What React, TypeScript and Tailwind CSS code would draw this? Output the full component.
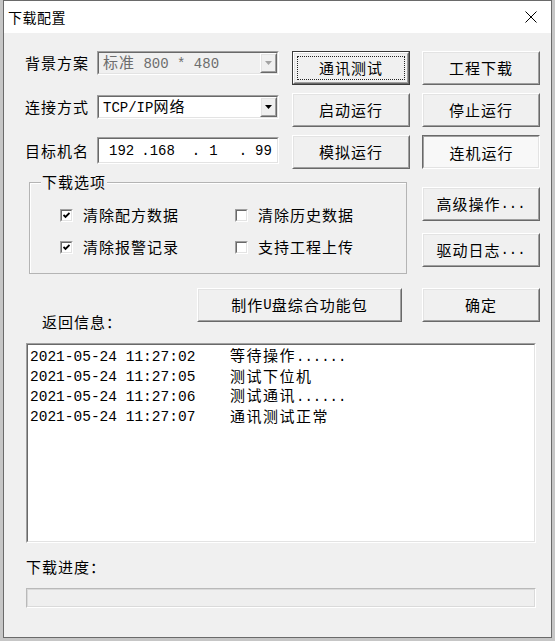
import React from "react";

const CJK = /([\u3000-\u303f\u4e00-\u9fff\uff00-\uffef]+)/;

type TProps = { text: string; cjk?: string; asc?: string };

// splits a string into CJK and ASCII runs so each gets its own font and width
const T = ({ text, cjk = "text-[15px] tracking-[1px]", asc = "text-[14px]" }: TProps) => (
	<>
		{text
			.split(CJK)
			.filter(Boolean)
			.map((s, i) =>
				CJK.test(s) ? (
					<span key={i} className={`font-['Noto_Sans_CJK_SC',sans-serif] ${cjk}`}>
						{s}
					</span>
				) : (
					<span key={i} className={`font-['Liberation_Mono',monospace] whitespace-pre ${asc}`}>
						{s}
					</span>
				),
			)}
	</>
);

const raisedOuter = "border border-t-white border-l-white border-r-[#696969] border-b-[#696969]";
const raisedInner = "border border-t-[#e3e3e3] border-l-[#e3e3e3] border-r-[#a0a0a0] border-b-[#a0a0a0]";
const sunkenOuter = "border border-t-[#a0a0a0] border-l-[#a0a0a0] border-r-white border-b-white";
const sunkenInner = "border border-t-[#696969] border-l-[#696969] border-r-[#e3e3e3] border-b-[#e3e3e3]";

type BtnProps = { label: string; w: string; kind?: "normal" | "default" | "pressed" };

const Btn = ({ label, w, kind = "normal" }: BtnProps) => {
	if (kind === "default") {
		return (
			<div className={`${w} h-[34px] border border-[#3a3a3a]`}>
				<div className={`h-full ${raisedOuter}`}>
					<div className={`relative h-full ${raisedInner} flex items-center justify-center leading-[18px]`}>
						<T text={label} />
						<div className="absolute inset-[2px] border border-dotted border-[#222]" />
					</div>
				</div>
			</div>
		);
	}
	if (kind === "pressed") {
		return (
			<div className={`${w} h-[34px] border border-t-[#696969] border-l-[#696969] border-r-white border-b-white`}>
				<div className="h-full border border-t-[#a0a0a0] border-l-[#a0a0a0] border-r-[#e3e3e3] border-b-[#e3e3e3] bg-[#f8f8f8] flex items-center justify-center pt-[1px] pl-[1px] leading-[18px]">
					<T text={label} />
				</div>
			</div>
		);
	}
	return (
		<div className={`${w} h-[34px] ${raisedOuter}`}>
			<div className={`h-full ${raisedInner} flex items-center justify-center leading-[18px]`}>
				<T text={label} />
			</div>
		</div>
	);
};

const Arrow = ({ color }: { color: string }) => (
	<svg width="7" height="4" viewBox="0 0 7 4">
		<path d="M0 0 H7 L3.5 4 Z" fill={color} />
	</svg>
);

const Combo = ({ text, disabled = false }: { text: string; disabled?: boolean }) => (
	<div className={`w-[182px] h-[24px] ${sunkenOuter}`}>
		<div
			className={`h-full ${sunkenInner} flex items-center ${disabled ? "bg-[#f0f0f0] text-[#6d6d6d]" : "bg-white text-black"}`}
		>
			<div className="flex-1 pl-[4px] leading-[18px] whitespace-pre">
				<T text={text} />
			</div>
			<div className={`w-[17px] h-full ${raisedOuter}`}>
				<div className={`h-full ${raisedInner} flex items-center justify-center bg-[#f0f0f0]`}>
					<Arrow color={disabled ? "#a3a3a3" : "#000"} />
				</div>
			</div>
		</div>
	</div>
);

const Label = ({ text }: { text: string }) => (
	<div className="w-[72px] leading-[18px]">
		<T text={text} />
	</div>
);

const Check = ({ label, checked = false }: { label: string; checked?: boolean }) => (
	<div className="flex items-center h-[20px]">
		<div className={`w-[13px] h-[13px] ${sunkenOuter}`}>
			<div className={`w-full h-full bg-white ${sunkenInner} flex items-center justify-center`}>
				{checked && (
					<svg width="7" height="7" viewBox="0 0 7 7">
						<path d="M0.5 3 L2.5 5 L6.5 1" fill="none" stroke="#000" strokeWidth="1.8" />
					</svg>
				)}
			</div>
		</div>
		<span className="ml-[10px] leading-[18px]">
			<T text={label} />
		</span>
	</div>
);

const logLines = [
	{ time: "2021-05-24 11:27:02", msg: "等待操作......" },
	{ time: "2021-05-24 11:27:05", msg: "测试下位机" },
	{ time: "2021-05-24 11:27:06", msg: "测试通讯......" },
	{ time: "2021-05-24 11:27:07", msg: "通讯测试正常" },
];

const ipParts = [
	{ t: "192", ml: "ml-[10px]" },
	{ t: ".", ml: "ml-[7px]" },
	{ t: "168", ml: "ml-0" },
	{ t: ".", ml: "ml-[17px]" },
	{ t: "1", ml: "ml-[9px]" },
	{ t: ".", ml: "ml-[21px]" },
	{ t: "99", ml: "ml-[8px]" },
];

export default function App() {
	return (
		<div className="w-[555px] h-[641px] overflow-hidden bg-[#c6c6c6]">
			<div className="ml-[3px] w-[549px] h-[638px] border border-[#6a6a6a] bg-[#f0f0f0] flex flex-col text-black">
				{/* title bar */}
				<div className="h-[32px] shrink-0 bg-white flex items-center justify-between pl-[4px] pr-[14px]">
					<span className="font-['Noto_Sans_CJK_SC',sans-serif] text-[14px] tracking-[0.5px] leading-[18px]">
						下载配置
					</span>
					<svg width="12" height="12" viewBox="0 0 12 12">
						<path d="M0.5 0.5 L11.5 11.5 M11.5 0.5 L0.5 11.5" stroke="#000" strokeWidth="1" />
					</svg>
				</div>

				<div className="flex-1 pl-[21px] pt-[18px] flex flex-col">
					{/* connection settings + command buttons */}
					<div className="flex items-start">
						<div className="w-[254px] flex flex-col">
							<div className="flex items-center h-[24px]">
								<Label text="背景方案" />
								<Combo text="标准 800 * 480" disabled />
							</div>
							<div className="mt-[20px] flex items-center h-[24px]">
								<Label text="连接方式" />
								<Combo text="TCP/IP网络" />
							</div>
							<div className="mt-[18px] flex items-center h-[27px]">
								<Label text="目标机名" />
								<div className={`w-[182px] h-[27px] ${sunkenOuter}`}>
									<div className={`h-full ${sunkenInner} bg-white flex items-center leading-[18px]`}>
										{ipParts.map((p, i) => (
											<span key={i} className={`${p.ml} font-['Liberation_Mono',monospace] text-[14px]`}>
												{p.t}
											</span>
										))}
									</div>
								</div>
							</div>
						</div>
						<div className="ml-[13px] grid grid-cols-[118px_118px] gap-x-[12px] gap-y-[8px]">
							<Btn label="通讯测试" w="w-[118px]" kind="default" />
							<Btn label="工程下载" w="w-[118px]" />
							<Btn label="启动运行" w="w-[118px]" />
							<Btn label="停止运行" w="w-[118px]" />
							<Btn label="模拟运行" w="w-[118px]" />
							<Btn label="连机运行" w="w-[118px]" kind="pressed" />
						</div>
					</div>

					{/* download options */}
					<div className="mt-[4px] flex items-start">
						<fieldset className="ml-[4px] w-[378px] h-[101px] border border-[#b4b4b4] shadow-[inset_1px_1px_0_#fff]">
							<legend className="ml-[11px] px-[1px] bg-[#f0f0f0] leading-[18px]">
								<T text="下载选项" />
							</legend>
							<div className="grid grid-cols-[175px_150px] gap-y-[12px] pl-[30px] pt-[14px]">
								<Check label="清除配方数据" checked />
								<Check label="清除历史数据" />
								<Check label="清除报警记录" checked />
								<Check label="支持工程上传" />
							</div>
						</fieldset>
						<div className="ml-[15px] mt-[14px] flex flex-col gap-[12px]">
							<Btn label="高级操作..." w="w-[118px]" />
							<Btn label="驱动日志..." w="w-[118px]" />
						</div>
					</div>

					{/* return info header */}
					<div className="mt-[14px] h-[55px] flex items-start">
						<div className="w-[172px] pl-[17px] pt-[25px] leading-[18px]">
							<T text="返回信息：" />
						</div>
						<Btn label="制作U盘综合功能包" w="w-[205px]" />
						<div className="ml-[20px]">
							<Btn label="确定" w="w-[118px]" />
						</div>
					</div>

					{/* log */}
					<div className={`ml-[1px] w-[510px] h-[200px] ${sunkenOuter}`}>
						<div className={`h-full ${sunkenInner} bg-white pl-[2px]`}>
							{logLines.map((l) => (
								<div key={l.time} className="grid grid-cols-[200px_auto] h-[20px] items-center leading-[20px]">
									<span>
										<T text={l.time} asc="text-[14.5px]" />
									</span>
									<span>
										<T text={l.msg} cjk="text-[15px] tracking-[1.5px]" />
									</span>
								</div>
							))}
						</div>
					</div>

					<div className="mt-[15px] ml-[1px] leading-[18px]">
						<T text="下载进度：" />
					</div>
					<div className="mt-[12px] ml-[1px] w-[510px] h-[20px] border border-t-[#b9b9b9] border-l-[#b9b9b9] border-r-white border-b-white">
						<div className="h-full border border-[#dadada] bg-[#efefef]" />
					</div>
				</div>
			</div>
		</div>
	);
}
